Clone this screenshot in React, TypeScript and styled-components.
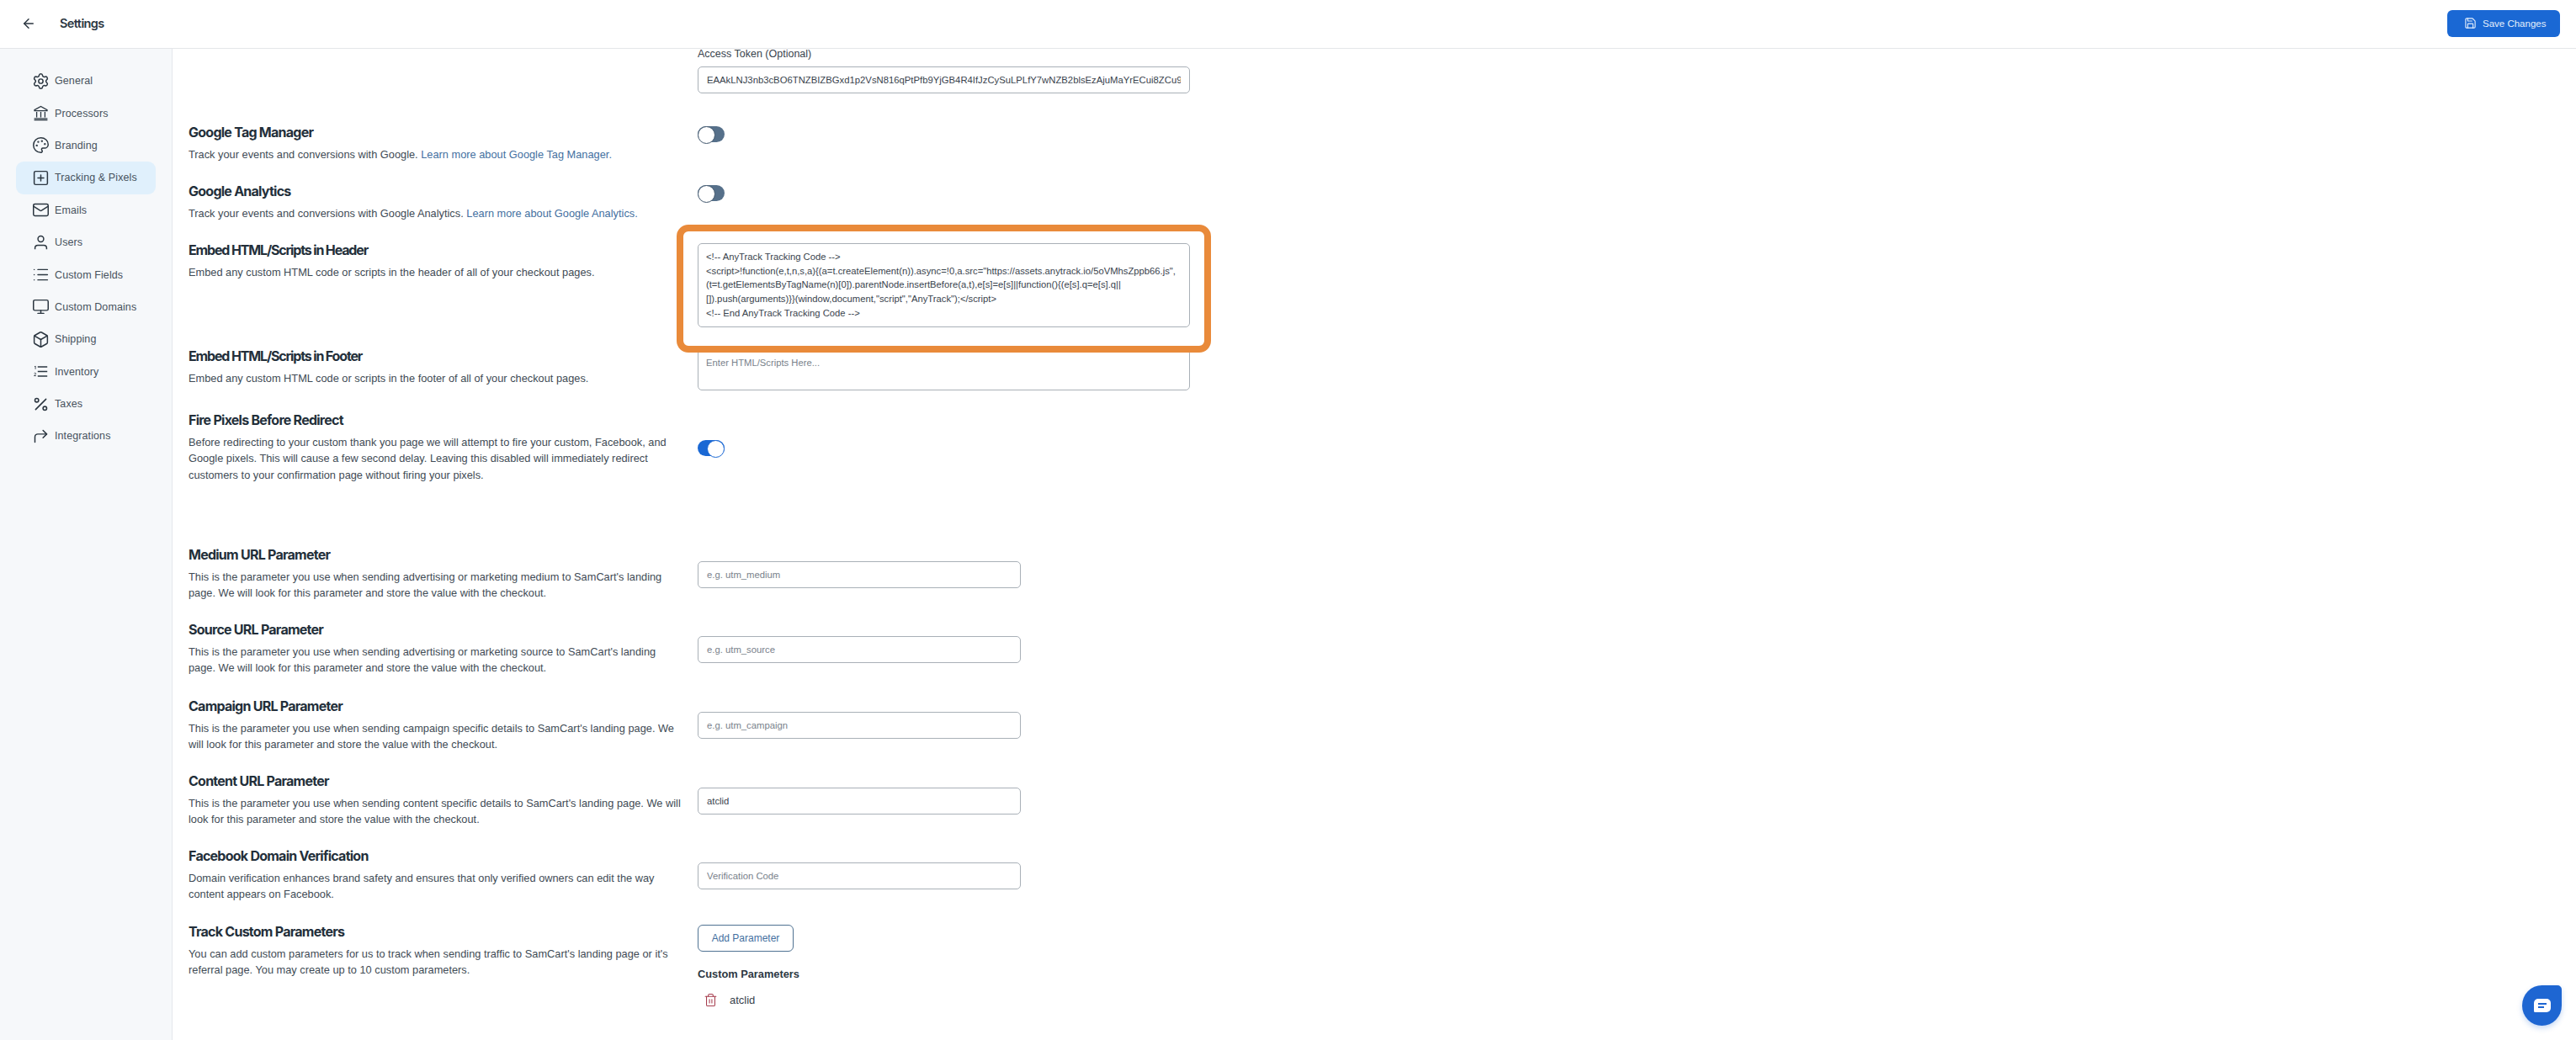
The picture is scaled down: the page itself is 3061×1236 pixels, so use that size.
import React from "react";
import styled, { createGlobalStyle } from "styled-components";
import {
  ArrowLeft,
  Box,
  CornerUpRight,
  List,
  Mail,
  Monitor,
  Palette,
  Percent,
  Save,
  Settings,
  SquarePlus,
  Trash2,
} from "lucide-react";

const GlobalStyle = createGlobalStyle`
  html, body {
    margin: 0;
    padding: 0;
    height: 100%;
    overflow: hidden;
    background: #fff;
    font-family: "Liberation Sans", Arial, sans-serif;
  }
  #root { height: 100%; }
  * { box-sizing: border-box; }
`;

const Page = styled.div`
  display: flex;
  flex-direction: column;
  height: 1236px;
`;

const TopBar = styled.header`
  flex: none;
  display: flex;
  align-items: center;
  height: 58px;
  padding: 0 19px 2px 25px;
  border-bottom: 1px solid #e4e6e9;
`;

const BackButton = styled.span`
  display: flex;
  color: #2b3640;
  margin-right: 28px;
`;

const PageTitle = styled.h1`
  flex: 1;
  margin: 0;
  font: 600 14.5px/20px Inter, sans-serif;
  letter-spacing: -0.6px;
  color: #2c3742;
`;

const SaveButton = styled.button`
  display: flex;
  align-items: center;
  gap: 7px;
  width: 134px;
  height: 32px;
  padding: 0 0 0 20px;
  border: 0;
  border-radius: 6px;
  background: #1a68d4;
  color: #e4eefb;
  font: 400 11.5px "Liberation Sans", sans-serif;
`;

const Body = styled.div`
  flex: 1;
  display: flex;
  min-height: 0;
`;

const Sidebar = styled.nav`
  flex: none;
  width: 205px;
  padding: 19px 19px 0;
  background: #f6f8fa;
  border-right: 1px solid #e4e7ec;
`;

const NavItem = styled.a<{ $active?: boolean }>`
  display: flex;
  align-items: center;
  gap: 6px;
  height: 38.4px;
  padding-left: 19px;
  border-radius: 9px;
  background: ${(p) => (p.$active ? "#e0f0fc" : "transparent")};
  color: #47525d;
  font-size: 12.5px;
  letter-spacing: 0.1px;

  svg {
    flex: none;
    color: #2b3640;
  }
`;

const Main = styled.main`
  flex: 1;
  min-width: 0;
  padding-left: 19px;
  overflow: hidden;
`;

const TokenBlock = styled.div`
  margin: 0 0 36px 605px;
`;

const FieldLabel = styled.label`
  display: block;
  margin-bottom: 9px;
  font-size: 12.5px;
  line-height: 12px;
  color: #39434d;
`;

const Row = styled.section<{ $height: number; $controlTop: number }>`
  display: grid;
  grid-template-columns: 605px 1fr;
  height: ${(p) => p.$height}px;

  > div:last-child {
    padding-top: ${(p) => p.$controlTop}px;
  }
`;

const RowText = styled.div`
  width: 590px;
`;

const Heading = styled.h2<{ $tight?: boolean }>`
  margin: 0 0 7px;
  font: 700 16px/20px Inter, sans-serif;
  letter-spacing: ${(p) => (p.$tight ? "-1.15px" : "-0.75px")};
  color: #232f3a;
`;

const Description = styled.p`
  margin: 0;
  font-size: 12.8px;
  line-height: 19.4px;
  color: #414b55;
`;

const TextLink = styled.a`
  color: #44709f;
`;

const Toggle = styled.span<{ $on?: boolean }>`
  display: flex;
  justify-content: ${(p) => (p.$on ? "flex-end" : "flex-start")};
  width: 32px;
  height: 19px;
  border-radius: 10px;
  background: ${(p) => (p.$on ? "#1a68d4" : "#56708a")};

  &::after {
    content: "";
    width: 19px;
    height: 19px;
    border-radius: 50%;
    background: #fff;
    border: 1px solid ${(p) => (p.$on ? "#1a68d4" : "#40566c")};
  }
`;

const TextInput = styled.input<{ $wide?: boolean }>`
  display: block;
  width: ${(p) => (p.$wide ? 585 : 384)}px;
  height: 32px;
  padding: 0 10px;
  border: 1px solid #a9b0b7;
  border-radius: 5px;
  background: #fff;
  color: #39434d;
  font: 400 11.3px "Liberation Sans", sans-serif;
  outline: none;

  &::placeholder {
    color: #79828b;
  }
`;

const CodeArea = styled.textarea<{ $height: number }>`
  display: block;
  width: 585px;
  height: ${(p) => p.$height}px;
  padding: 7px 4px 0 9px;
  border: 1px solid #a9b0b7;
  border-radius: 5px;
  resize: none;
  overflow: hidden;
  background: #fff;
  color: #39434d;
  font: 400 11.25px/16.7px "Liberation Sans", sans-serif;
  outline: none;

  &::placeholder {
    color: #79828b;
  }
`;

const Highlighted = styled.div`
  position: relative;
  width: 585px;
`;

const HighlightFrame = styled.div`
  position: absolute;
  top: -22px;
  right: -25px;
  bottom: -30px;
  left: -25px;
  z-index: 2;
  border: 8px solid #e98a3a;
  border-radius: 14px;
  pointer-events: none;
`;

const OutlineButton = styled.button`
  display: block;
  width: 114px;
  height: 32px;
  padding: 0;
  border: 1px solid #4f7292;
  border-radius: 6px;
  background: #fff;
  color: #44709f;
  font: 400 12px "Liberation Sans", sans-serif;
`;

const SubHeading = styled.div`
  margin-top: 19px;
  font-size: 12.8px;
  font-weight: 700;
  line-height: 16px;
  color: #2c3742;
`;

const ParamRow = styled.div`
  display: flex;
  align-items: center;
  gap: 14px;
  margin-top: 14px;
  padding-left: 7px;
  font-size: 13px;
  color: #39434d;

  svg {
    color: #a63d4e;
  }
`;

const ChatBubble = styled.div`
  position: fixed;
  right: 17px;
  bottom: 17px;
  display: flex;
  align-items: center;
  justify-content: center;
  width: 47px;
  height: 48px;
  border-radius: 50% 5px 50% 50%;
  background: #1e66d2;
  box-shadow: 0 3px 6px rgba(30, 102, 210, 0.25);
`;

function BankIcon() {
  return (
    <svg width="21" height="21" viewBox="0 0 21 21" fill="none" stroke="currentColor" strokeWidth="1.3">
      <path d="M3 6.6 10.5 2.4 18 6.6v1H3z" />
      <path d="M5.6 9v6.4M10.5 9v6.4M15.4 9v6.4" />
      <path d="M2.6 16.8h15.8M2.6 18.6h15.8" />
    </svg>
  );
}

function UserIcon() {
  return (
    <svg width="21" height="21" viewBox="0 0 21 21" fill="none" stroke="currentColor" strokeWidth="1.5">
      <circle cx="10.5" cy="6" r="3.4" />
      <path d="M3.6 18.2v-1.4c0-2 1.6-3.3 3.4-3.3h7c1.8 0 3.4 1.3 3.4 3.3v1.4" />
    </svg>
  );
}

function NumberedListIcon() {
  return (
    <svg width="21" height="21" viewBox="0 0 21 21" fill="none" stroke="currentColor">
      <path strokeWidth="1.5" d="M6.8 5h11.4M6.8 10.5h11.4M6.8 16h11.4" />
      <path strokeWidth="0.9" d="M3 4.8l1.1-.7v3.6M2.6 12.8c.5-.8 2.1-.6 2 .4 0 .8-1.4 1.4-2 2.4h2.2" />
    </svg>
  );
}

const navItems = [
  { label: "General", icon: <Settings size={21} strokeWidth={1.7} /> },
  { label: "Processors", icon: <BankIcon /> },
  { label: "Branding", icon: <Palette size={21} strokeWidth={1.7} /> },
  { label: "Tracking & Pixels", icon: <SquarePlus size={21} strokeWidth={1.7} />, active: true },
  { label: "Emails", icon: <Mail size={21} strokeWidth={1.7} /> },
  { label: "Users", icon: <UserIcon /> },
  { label: "Custom Fields", icon: <List size={21} strokeWidth={1.7} /> },
  { label: "Custom Domains", icon: <Monitor size={21} strokeWidth={1.7} /> },
  { label: "Shipping", icon: <Box size={21} strokeWidth={1.7} /> },
  { label: "Inventory", icon: <NumberedListIcon /> },
  { label: "Taxes", icon: <Percent size={21} strokeWidth={1.8} /> },
  { label: "Integrations", icon: <CornerUpRight size={21} strokeWidth={1.7} /> },
];

const accessToken =
  "EAAkLNJ3nb3cBO6TNZBIZBGxd1p2VsN816qPtPfb9YjGB4R4IfJzCySuLPLfY7wNZB2blsEzAjuMaYrECui8ZCu9SkQ2x7ZBh";

const trackingCode = [
  "<!-- AnyTrack Tracking Code -->",
  '<script>!function(e,t,n,s,a){(a=t.createElement(n)).async=!0,a.src="https://assets.anytrack.io/5oVMhsZppb66.js",',
  "(t=t.getElementsByTagName(n)[0]).parentNode.insertBefore(a,t),e[s]=e[s]||function(){(e[s].q=e[s].q||",
  '[]).push(arguments)}}(window,document,"script","AnyTrack");</script>',
  "<!-- End AnyTrack Tracking Code -->",
].join("\n");

const urlParams = [
  {
    title: "Medium URL Parameter",
    text: "This is the parameter you use when sending advertising or marketing medium to SamCart's landing page. We will look for this parameter and store the value with the checkout.",
    placeholder: "e.g. utm_medium",
    height: 89,
    top: 18,
  },
  {
    title: "Source URL Parameter",
    text: "This is the parameter you use when sending advertising or marketing source to SamCart's landing page. We will look for this parameter and store the value with the checkout.",
    placeholder: "e.g. utm_source",
    height: 91,
    top: 18,
  },
  {
    title: "Campaign URL Parameter",
    text: "This is the parameter you use when sending campaign specific details to SamCart's landing page. We will look for this parameter and store the value with the checkout.",
    placeholder: "e.g. utm_campaign",
    height: 89,
    top: 17,
  },
  {
    title: "Content URL Parameter",
    text: "This is the parameter you use when sending content specific details to SamCart's landing page. We will look for this parameter and store the value with the checkout.",
    placeholder: "",
    value: "atclid",
    height: 89,
    top: 18,
  },
  {
    title: "Facebook Domain Verification",
    text: "Domain verification enhances brand safety and ensures that only verified owners can edit the way content appears on Facebook.",
    placeholder: "Verification Code",
    height: 90,
    top: 18,
  },
];

export default function App() {
  return (
    <Page>
      <GlobalStyle />
      <TopBar>
        <BackButton>
          <ArrowLeft size={18} strokeWidth={2} />
        </BackButton>
        <PageTitle>Settings</PageTitle>
        <SaveButton>
          <Save size={15} strokeWidth={1.8} />
          Save Changes
        </SaveButton>
      </TopBar>
      <Body>
        <Sidebar>
          {navItems.map((item) => (
            <NavItem key={item.label} $active={item.active}>
              {item.icon}
              {item.label}
            </NavItem>
          ))}
        </Sidebar>
        <Main>
          <TokenBlock>
            <FieldLabel>Access Token (Optional)</FieldLabel>
            <TextInput $wide readOnly value={accessToken} />
          </TokenBlock>

          <Row $height={70} $controlTop={3}>
            <RowText>
              <Heading>Google Tag Manager</Heading>
              <Description>
                Track your events and conversions with Google.{" "}
                <TextLink>Learn more about Google Tag Manager.</TextLink>
              </Description>
            </RowText>
            <div>
              <Toggle />
            </div>
          </Row>

          <Row $height={70} $controlTop={3}>
            <RowText>
              <Heading>Google Analytics</Heading>
              <Description>
                Track your events and conversions with Google Analytics.{" "}
                <TextLink>Learn more about Google Analytics.</TextLink>
              </Description>
            </RowText>
            <div>
              <Toggle />
            </div>
          </Row>

          <Row $height={126} $controlTop={2}>
            <RowText>
              <Heading $tight>Embed HTML/Scripts in Header</Heading>
              <Description>Embed any custom HTML code or scripts in the header of all of your checkout pages.</Description>
            </RowText>
            <div>
              <Highlighted>
                <CodeArea $height={100} readOnly value={trackingCode} />
                <HighlightFrame />
              </Highlighted>
            </div>
          </Row>

          <Row $height={76} $controlTop={2}>
            <RowText>
              <Heading $tight>Embed HTML/Scripts in Footer</Heading>
              <Description>Embed any custom HTML code or scripts in the footer of all of your checkout pages.</Description>
            </RowText>
            <div>
              <CodeArea $height={49} placeholder="Enter HTML/Scripts Here..." />
            </div>
          </Row>

          <Row $height={160} $controlTop={34}>
            <RowText>
              <Heading>Fire Pixels Before Redirect</Heading>
              <Description>
                Before redirecting to your custom thank you page we will attempt to fire your custom, Facebook, and
                Google pixels. This will cause a few second delay. Leaving this disabled will immediately redirect
                customers to your confirmation page without firing your pixels.
              </Description>
            </RowText>
            <div>
              <Toggle $on />
            </div>
          </Row>

          {urlParams.map((param) => (
            <Row key={param.title} $height={param.height} $controlTop={param.top}>
              <RowText>
                <Heading>{param.title}</Heading>
                <Description>{param.text}</Description>
              </RowText>
              <div>
                <TextInput readOnly placeholder={param.placeholder} value={param.value ?? ""} />
              </div>
            </Row>
          ))}

          <Row $height={120} $controlTop={2}>
            <RowText>
              <Heading>Track Custom Parameters</Heading>
              <Description>
                You can add custom parameters for us to track when sending traffic to SamCart's landing page or it's
                referral page. You may create up to 10 custom parameters.
              </Description>
            </RowText>
            <div>
              <OutlineButton>Add Parameter</OutlineButton>
              <SubHeading>Custom Parameters</SubHeading>
              <ParamRow>
                <Trash2 size={17} strokeWidth={1.5} />
                atclid
              </ParamRow>
            </div>
          </Row>
        </Main>
      </Body>
      <ChatBubble>
        <svg width="20" height="16" viewBox="0 0 20 16">
          <path
            fill="#fff"
            d="M5 0h10a5 5 0 0 1 5 5v6a5 5 0 0 1-5 5H1.5a1.5 1.5 0 0 1-1.5-1.5V5a5 5 0 0 1 5-5z"
          />
          <path stroke="#1e66d2" strokeWidth="1.8" d="M5 6h10M5 10h7" />
        </svg>
      </ChatBubble>
    </Page>
  );
}
